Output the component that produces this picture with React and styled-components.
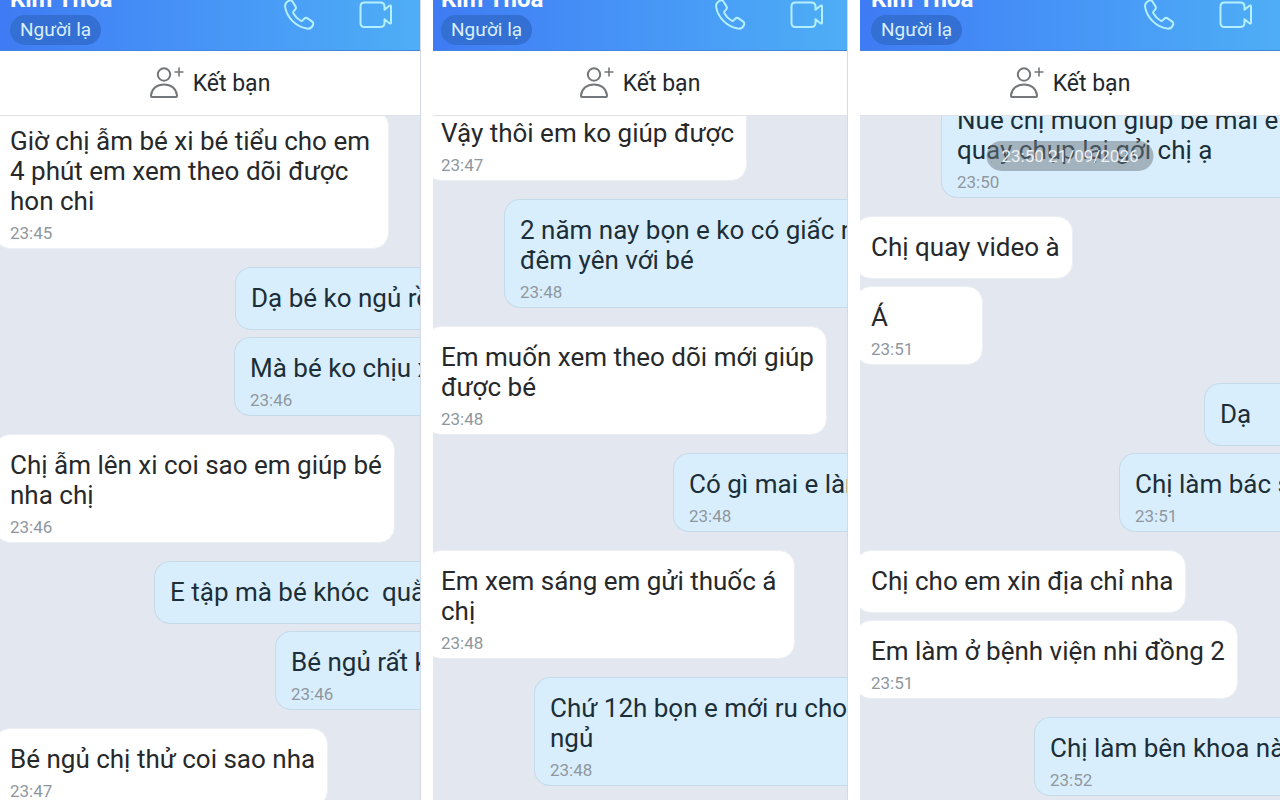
import React from "react";
import styled, { createGlobalStyle } from "styled-components";

const chats = [
  {
    id: "first",
    inset: 10,
    insetEnd: 27,
    scrolled: 6,
    messages: [
      {
        text: "Giờ chị ẫm bé xi bé tiểu cho em\n4 phút em xem theo dõi được\nhon chi",
        time: "23:45",
        width: 395,
      },
      { mine: true, text: "Dạ bé ko ngủ rồ", width: 185 },
      { mine: true, text: "Mà bé ko chịu x", time: "23:46", width: 186 },
      { text: "Chị ẫm lên xi coi sao em giúp bé\nnha chị", time: "23:46" },
      { mine: true, text: "E tập mà bé khóc  quằ", width: 266 },
      { mine: true, text: "Bé ngủ rất k", time: "23:46", width: 145 },
      { text: "Bé ngủ chị thử coi sao nha", time: "23:47" },
    ],
  },
  {
    id: "second",
    inset: 8,
    insetEnd: 23,
    scrolled: 14,
    messages: [
      { text: "Vậy thôi em ko giúp được", time: "23:47" },
      {
        mine: true,
        text: "2 năm nay bọn e ko có giấc n\nđêm yên với bé",
        time: "23:48",
        width: 343,
      },
      { text: "Em muốn xem theo dõi mới giúp\nđược bé", time: "23:48" },
      { mine: true, text: "Có gì mai e làm", time: "23:48", width: 174 },
      {
        text: "Em xem sáng em gửi thuốc á\nchị",
        time: "23:48",
        width: 370,
      },
      {
        mine: true,
        text: "Chứ 12h bọn e mới ru cho\nngủ",
        time: "23:48",
        width: 313,
      },
    ],
  },
  {
    id: "third",
    inset: 11,
    insetEnd: 27,
    scrolled: 27,
    date: "23:50 21/09/2026",
    messages: [
      {
        mine: true,
        text: "Nuế chị muốn giúp bé mai e\nquay chụp lại gởi chị ạ",
        time: "23:50",
        width: 339,
      },
      { text: "Chị quay video à" },
      { text: "Á", time: "23:51" },
      { mine: true, text: "Dạ", width: 76 },
      { mine: true, text: "Chị làm bác s", time: "23:51", width: 161 },
      { text: "Chị cho em xin địa chỉ nha" },
      { text: "Em làm ở bệnh viện nhi đồng 2", time: "23:51" },
      { mine: true, text: "Chị làm bên khoa nà", time: "23:52", width: 246 },
    ],
  },
];

const PhoneIcon = () => (
  <svg width="32" height="32" viewBox="0 0 32 32" aria-hidden="true">
    <path d="M6.2 1.6 C3.4 2.8 1.6 5 2.2 8.4 C4 18.6 13 27.8 24 29.6 C27 30 29.4 28 30.2 25.4 C30.5 24.2 30.2 23.4 29.2 22.6 L24.6 19.4 C23.4 18.6 22.2 18.8 21.2 19.8 L19.6 21.4 C18.9 22 18.2 22 17.4 21.5 C14.4 19.8 12 17.2 10.4 14.2 C10 13.4 10.1 12.7 10.7 12.1 L12 10.8 C13 9.8 13.2 8.6 12.5 7.4 L9.6 2.8 C8.8 1.5 7.6 1 6.2 1.6 Z" />
  </svg>
);

const VideoIcon = () => (
  <svg width="34" height="28" viewBox="0 0 34 28" aria-hidden="true">
    <path d="M5.5 1.5 H21 Q25.5 1.5 25.5 5.5 V8.8 L30.4 4.8 Q32 3.8 32 5.5 V21.5 Q32 23.2 30.4 22.2 L25.5 18.2 V22 Q25.5 26 21 26 H5.5 Q1.5 26 1.5 22 V5.5 Q1.5 1.5 5.5 1.5 Z" />
  </svg>
);

const AddFriendIcon = () => (
  <svg width="34" height="34" viewBox="0 0 34 34" aria-hidden="true">
    <circle cx="14" cy="8.5" r="6.2" />
    <path d="M2.6 31 Q1 31 1 29.4 C1.8 22.6 7 18.4 14 18.4 C21 18.4 26.2 22.6 27 29.4 Q27 31 25.4 31 Z" />
    <path d="M29 1.5 V10.5 M24.5 6 H33.5" strokeWidth="1.6" />
  </svg>
);

const Message = ({ text, time, mine, width, inset, grouped }) => (
  <Bubble $mine={mine} $width={width} $inset={inset} $grouped={grouped}>
    <Text>{text}</Text>
    {time && <Time>{time}</Time>}
  </Bubble>
);

const Chat = ({ chat }) => (
  <Panel>
    <Header $start={chat.inset} $end={chat.insetEnd}>
      <Contact>
        <Name>Kim Thoa</Name>
        <Tag>Người lạ</Tag>
      </Contact>
      <Actions>
        <IconButton type="button" aria-label="Gọi thoại">
          <PhoneIcon />
        </IconButton>
        <IconButton type="button" aria-label="Gọi video">
          <VideoIcon />
        </IconButton>
      </Actions>
    </Header>
    <AddFriend type="button">
      <AddFriendIcon />
      Kết bạn
    </AddFriend>
    <Body>
      <Messages $scrolled={chat.scrolled}>
        {chat.messages.map((message, i) => {
          const previous = chat.messages[i - 1];
          return (
            <Message
              key={message.text}
              inset={chat.inset}
              grouped={Boolean(previous) && previous.mine === message.mine}
              {...message}
            />
          );
        })}
      </Messages>
      {chat.date && <DatePill>{chat.date}</DatePill>}
    </Body>
  </Panel>
);

const App = () => (
  <>
    <GlobalStyle />
    <Page>
      {chats.map((chat) => (
        <Chat key={chat.id} chat={chat} />
      ))}
    </Page>
  </>
);

const GlobalStyle = createGlobalStyle`
  * {
    box-sizing: border-box;
  }
  body {
    margin: 0;
    background: #fff;
    font-family: Roboto, "Noto Sans", sans-serif;
    color: #23272b;
  }
  button {
    font: inherit;
    color: inherit;
    border: 0;
    padding: 0;
    background: transparent;
    cursor: pointer;
  }
`;

const Page = styled.main`
  display: grid;
  grid-template-columns: 421fr 415fr 420fr;
  gap: 12px;
  height: 100vh;
  overflow: hidden;
`;

const Panel = styled.section`
  display: flex;
  flex-direction: column;
  min-width: 0;
  overflow: hidden;
  border-right: 1px solid #d4d9e6;

  &:last-child {
    border-right: 0;
  }
`;

const Header = styled.header`
  display: flex;
  flex: none;
  justify-content: space-between;
  align-items: flex-end;
  height: 51px;
  padding: 0 ${({ $end }) => $end}px 5px ${({ $start }) => $start}px;
  background: linear-gradient(90deg, #3f7bf4, #4693f7 45%, #4eaef5);
  border-bottom: 1px solid #4484dc;
`;

const Contact = styled.div`
  display: flex;
  flex-direction: column;
  align-items: flex-start;
`;

const Name = styled.h2`
  margin: 0;
  font-size: 24px;
  line-height: 32px;
  font-weight: 700;
  color: #fff;
`;

const Tag = styled.span`
  padding: 0 10px;
  border-radius: 15px;
  font-size: 19px;
  line-height: 30px;
  color: #d8efff;
  background: #346fd4;
`;

const Actions = styled.div`
  display: flex;
  align-items: center;
  gap: 44px;
  height: 30px;
  margin-bottom: 15px;
`;

const IconButton = styled.button`
  display: flex;
  svg {
    fill: none;
    stroke: #b4f0ff;
    stroke-width: 2;
    stroke-linejoin: round;
  }
`;

const AddFriend = styled.button`
  display: flex;
  flex: none;
  align-items: center;
  justify-content: center;
  gap: 9px;
  height: 65px;
  font-size: 23px;
  border-bottom: 1px solid #dfe2e8;
  svg {
    fill: none;
    stroke: #747779;
    stroke-width: 2;
  }
`;

const Body = styled.div`
  position: relative;
  flex: 1;
  min-height: 0;
  overflow: hidden;
  background: #e3e7f0;
`;

const Messages = styled.div`
  display: flex;
  flex-direction: column;
  align-items: flex-start;
  margin-top: -${({ $scrolled }) => $scrolled}px;
`;

const Bubble = styled.article`
  flex: none;
  width: ${({ $width }) => ($width ? `${$width}px` : "auto")};
  min-width: ${({ $mine }) => ($mine ? "0" : "128px")};
  /* bubbles from the same sender sit closer together */
  margin-top: ${({ $grouped }) => ($grouped ? "7px" : "18px")};
  margin-left: ${({ $mine, $inset }) => ($mine ? "auto" : `${$inset - 16}px`)};
  padding: 15px 12px 5px 15px;
  border: 1px solid ${({ $mine }) => ($mine ? "#c5dbe9" : "#eceff5")};
  border-radius: ${({ $mine }) => ($mine ? "16px 0 0 16px" : "16px")};
  border-right-width: ${({ $mine }) => ($mine ? "0" : "1px")};
  overflow: hidden;
  color: ${({ $mine }) => ($mine ? "#1c2e38" : "#26282a")};
  background: ${({ $mine }) => ($mine ? "#d9eefd" : "#fff")};

  &:first-child {
    margin-top: 0;
  }
`;

const Text = styled.p`
  margin: 0;
  font-size: 26px;
  line-height: 30px;
  white-space: pre;

  &:last-child {
    margin-bottom: 11px;
  }
`;

const Time = styled.time`
  display: block;
  margin-top: 7px;
  font-size: 17px;
  line-height: 20px;
  color: #8f979e;
`;

const DatePill = styled.div`
  position: absolute;
  top: 25px;
  left: 50%;
  transform: translateX(-50%);
  padding: 0 15px;
  border-radius: 15px;
  font-size: 17px;
  line-height: 30px;
  white-space: nowrap;
  color: #eef1f3;
  background: rgba(110, 120, 128, 0.5);
`;

export default App;
